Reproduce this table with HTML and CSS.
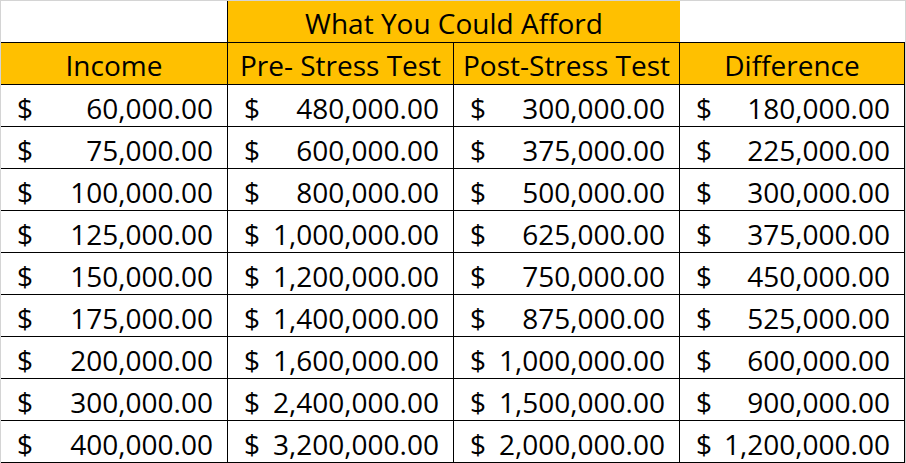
FILE: index.html
```html
<!DOCTYPE html>
<html lang="en">
<head>
<meta charset="utf-8">
<title>What You Could Afford</title>
<link rel="stylesheet" href="styles.css">
</head>
<body>
<div class="sheet">
  <div class="cell blank first"></div>
  <div class="cell title">What You Could Afford</div>
  <div class="cell blank last"></div>

  <div class="cell head">Income</div>
  <div class="cell head">Pre- Stress Test</div>
  <div class="cell head">Post-Stress Test</div>
  <div class="cell head">Difference</div>

  <div class="cell num"><span>$</span><span>60,000.00</span></div>
  <div class="cell num"><span>$</span><span>480,000.00</span></div>
  <div class="cell num"><span>$</span><span>300,000.00</span></div>
  <div class="cell num"><span>$</span><span>180,000.00</span></div>

  <div class="cell num"><span>$</span><span>75,000.00</span></div>
  <div class="cell num"><span>$</span><span>600,000.00</span></div>
  <div class="cell num"><span>$</span><span>375,000.00</span></div>
  <div class="cell num"><span>$</span><span>225,000.00</span></div>

  <div class="cell num"><span>$</span><span>100,000.00</span></div>
  <div class="cell num"><span>$</span><span>800,000.00</span></div>
  <div class="cell num"><span>$</span><span>500,000.00</span></div>
  <div class="cell num"><span>$</span><span>300,000.00</span></div>

  <div class="cell num"><span>$</span><span>125,000.00</span></div>
  <div class="cell num"><span>$</span><span>1,000,000.00</span></div>
  <div class="cell num"><span>$</span><span>625,000.00</span></div>
  <div class="cell num"><span>$</span><span>375,000.00</span></div>

  <div class="cell num"><span>$</span><span>150,000.00</span></div>
  <div class="cell num"><span>$</span><span>1,200,000.00</span></div>
  <div class="cell num"><span>$</span><span>750,000.00</span></div>
  <div class="cell num"><span>$</span><span>450,000.00</span></div>

  <div class="cell num"><span>$</span><span>175,000.00</span></div>
  <div class="cell num"><span>$</span><span>1,400,000.00</span></div>
  <div class="cell num"><span>$</span><span>875,000.00</span></div>
  <div class="cell num"><span>$</span><span>525,000.00</span></div>

  <div class="cell num"><span>$</span><span>200,000.00</span></div>
  <div class="cell num"><span>$</span><span>1,600,000.00</span></div>
  <div class="cell num"><span>$</span><span>1,000,000.00</span></div>
  <div class="cell num"><span>$</span><span>600,000.00</span></div>

  <div class="cell num"><span>$</span><span>300,000.00</span></div>
  <div class="cell num"><span>$</span><span>2,400,000.00</span></div>
  <div class="cell num"><span>$</span><span>1,500,000.00</span></div>
  <div class="cell num"><span>$</span><span>900,000.00</span></div>

  <div class="cell num"><span>$</span><span>400,000.00</span></div>
  <div class="cell num"><span>$</span><span>3,200,000.00</span></div>
  <div class="cell num"><span>$</span><span>2,000,000.00</span></div>
  <div class="cell num"><span>$</span><span>1,200,000.00</span></div>
</div>
</body>
</html>
```

FILE: styles.css
```css
html, body {
  margin: 0;
  padding: 0;
  background: #ffffff;
}

.sheet {
  width: 906px;
  height: 463px;
  box-sizing: border-box;
  border-top: 1px solid #d4d4d4;
  border-left: 1px solid #d4d4d4;
  border-right: 1px solid #d4d4d4;
  display: grid;
  grid-template-columns: 227px 226px 226px 225px;
  grid-auto-rows: 42px;
  font-family: "Open Sans", "Liberation Sans", sans-serif;
  font-size: 28px;
  color: #000;
  overflow: hidden;
}

.cell {
  box-sizing: border-box;
  border-right: 1px solid #000;
  border-bottom: 1px solid #000;
  white-space: nowrap;
}

.blank {
  background: #fff;
}

.blank.last {
  border-right: none;
}

.title {
  grid-column: span 2;
  background: #ffc000;
  border-right: none;
  display: flex;
  align-items: center;
  justify-content: center;
  padding-top: 2px;
}

.head {
  background: #ffc000;
  display: flex;
  align-items: center;
  justify-content: center;
  padding-top: 2px;
}

.num {
  display: flex;
  align-items: center;
  justify-content: space-between;
  padding: 4px 14px 0 16px;
}
```
